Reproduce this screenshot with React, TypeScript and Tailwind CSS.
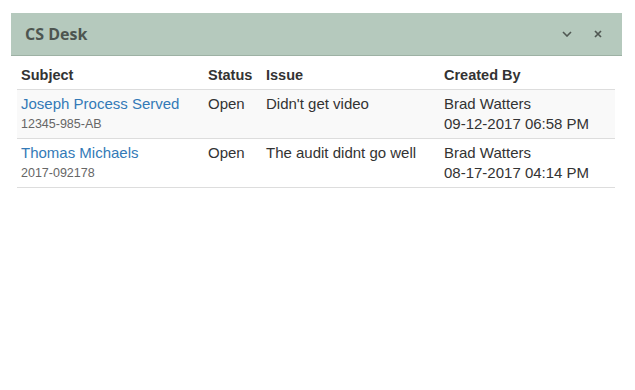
import React from 'react';

type Ticket = {
  subject: string;
  ref: string;
  status: string;
  issue: string;
  createdBy: string;
  createdAt: string;
};

const tickets: Ticket[] = [
  {
    subject: 'Joseph Process Served',
    ref: '12345-985-AB',
    status: 'Open',
    issue: "Didn't get video",
    createdBy: 'Brad Watters',
    createdAt: '09-12-2017 06:58 PM',
  },
  {
    subject: 'Thomas Michaels',
    ref: '2017-092178',
    status: 'Open',
    issue: 'The audit didnt go well',
    createdBy: 'Brad Watters',
    createdAt: '08-17-2017 04:14 PM',
  },
];

export default function App() {
  return (
    <div className="w-[635px] h-[390px] bg-white pt-[13px] px-[11px] [font-family:'Liberation_Sans',Arial,sans-serif]">
      <div className="w-[611px]">
        {/* header */}
        <div className="h-[43px] bg-[#b5c9bd] border-b border-[#9db1a4] flex items-center pl-[14px] pr-[20px]">
          <h2 className="flex-1 text-[16px] font-bold text-[#4d5550] [font-family:'Open_Sans',sans-serif]">CS Desk</h2>
          <button className="text-[#505853] mr-[22px]">
            <svg width="10" height="6" viewBox="0 0 10 6" fill="none">
              <path d="M1 1l4 4 4-4" stroke="currentColor" strokeWidth="1.6" />
            </svg>
          </button>
          <button className="text-[#505853]">
            <svg width="8" height="8" viewBox="0 0 8 8" fill="none">
              <path d="M1 1l6 6M7 1l-6 6" stroke="currentColor" strokeWidth="1.7" />
            </svg>
          </button>
        </div>

        {/* table */}
        <div className="px-[6px] pt-[5px]">
          <table className="w-[598px] border-collapse text-[15px] leading-[20px] text-[#333] table-fixed">
            <thead>
              <tr className="border-b border-[#ddd] text-[14.5px]">
                <th className="w-[187px] text-left font-bold px-[4px] py-[4px]">Subject</th>
                <th className="w-[58px] text-left font-bold px-[4px] py-[4px]">Status</th>
                <th className="w-[178px] text-left font-bold px-[4px] py-[4px]">Issue</th>
                <th className="text-left font-bold px-[4px] py-[4px]">Created By</th>
              </tr>
            </thead>
            <tbody>
              {tickets.map((t, i) => (
                <tr key={t.ref} className={`border-b border-[#ddd] align-top ${i % 2 === 0 ? 'bg-[#f9f9f9]' : 'bg-white'}`}>
                  <td className="px-[4px] py-[4px]">
                    <a href="#" className="text-[#337ab7] block">{t.subject}</a>
                    <div className="text-[12.5px] text-[#666]">{t.ref}</div>
                  </td>
                  <td className="px-[4px] py-[4px]">{t.status}</td>
                  <td className="px-[4px] py-[4px]">{t.issue}</td>
                  <td className="px-[4px] py-[4px]">
                    <div>{t.createdBy}</div>
                    <div>{t.createdAt}</div>
                  </td>
                </tr>
              ))}
            </tbody>
          </table>
        </div>
      </div>
    </div>
  );
}
